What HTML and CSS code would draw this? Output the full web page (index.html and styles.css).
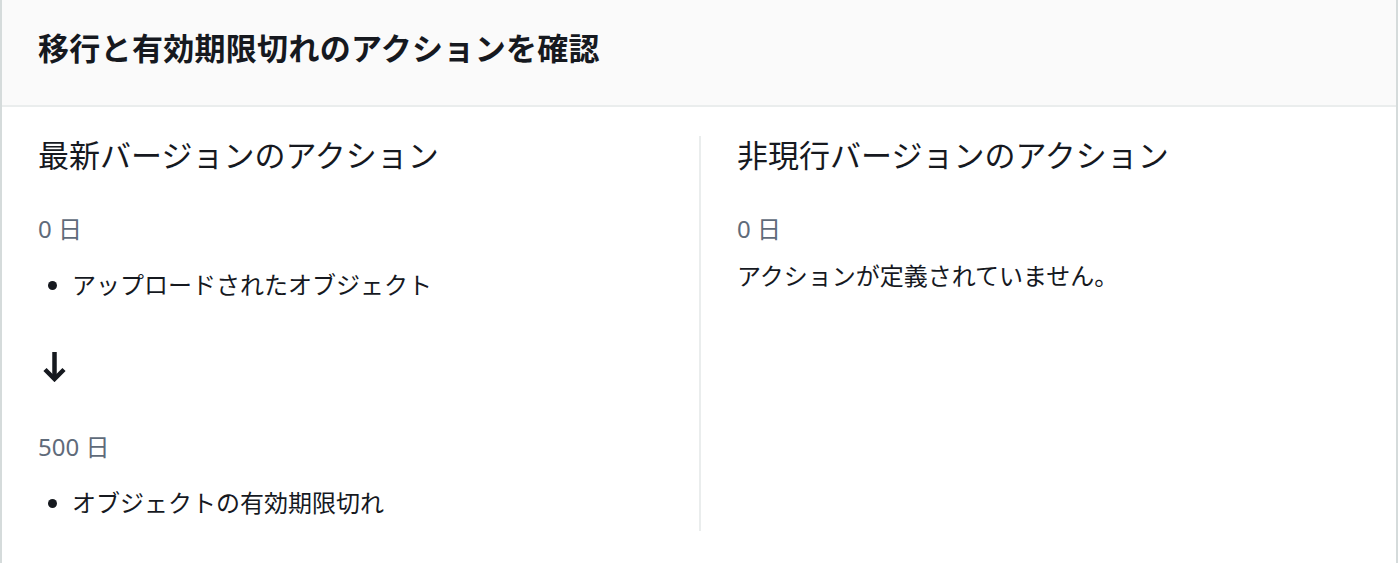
FILE: index.html
```html
<!DOCTYPE html>
<html lang="ja">
<head>
  <meta charset="UTF-8">
  <meta name="viewport" content="width=device-width, initial-scale=1.0">
  <title>移行と有効期限切れのアクションを確認</title>
  <link rel="stylesheet" href="styles.css">
</head>
<body>

  <div class="card">
    <div class="card-header">
      <h2>移行と有効期限切れのアクションを確認</h2>
    </div>

    <div class="card-body">
      <div class="column">
        <h3>最新バージョンのアクション</h3>
        <div class="day">0 日</div>
        <ul class="actions">
          <li>アップロードされたオブジェクト</li>
        </ul>
        <svg class="arrow" width="25" height="30" viewBox="0 0 25 30" aria-hidden="true">
          <path d="M12.5 0 V27" />
          <path d="M3 17.5 L12.5 27 L22 17.5" />
        </svg>
        <div class="day after-arrow">500 日</div>
        <ul class="actions">
          <li>オブジェクトの有効期限切れ</li>
        </ul>
      </div>

      <div class="column column-right">
        <h3>非現行バージョンのアクション</h3>
        <div class="day">0 日</div>
        <p class="empty">アクションが定義されていません。</p>
      </div>
    </div>
  </div>

</body>
</html>
```

FILE: styles.css
```css
* {
  margin: 0;
  padding: 0;
  box-sizing: border-box;
}

body {
  font-family: "Noto Sans", "Noto Sans CJK JP", sans-serif;
  color: #16191f;
  background: #ffffff;
}

.card {
  width: 1398px;
  border-left: 2px solid #d5dbdb;
  border-right: 2px solid #d5dbdb;
}

.card-header {
  height: 107px;
  padding: 28px 36px 0;
  background-color: #fafafa;
  border-bottom: 2px solid #eaeded;
}

.card-header h2 {
  font-size: 31px;
  line-height: 40px;
  font-weight: 700;
  letter-spacing: 0.3px;
}

.card-body {
  display: grid;
  grid-template-columns: 1fr 1fr;
  padding: 29px 0 32px;
}

.column {
  display: flex;
  flex-direction: column;
  align-items: flex-start;
  padding: 0 36px 12px;
}

.column-right {
  border-left: 2px solid #eaeded;
}

h3 {
  font-size: 31px;
  line-height: 38px;
  font-weight: 400;
}

.day {
  margin-top: 39px;
  font-size: 24px;
  line-height: 32px;
  color: #5f6b7a;
}

.day.after-arrow {
  margin-top: 49px;
}

.actions {
  margin-top: 24px;
  padding-left: 34px;
  font-size: 24px;
  line-height: 32px;
}

.arrow {
  display: block;
  margin: 51px 0 0 4px;
  fill: none;
  stroke: #16191f;
  stroke-width: 4.5;
  stroke-linejoin: miter;
}

.empty {
  margin-top: 15px;
  font-size: 24px;
  line-height: 32px;
}
```
